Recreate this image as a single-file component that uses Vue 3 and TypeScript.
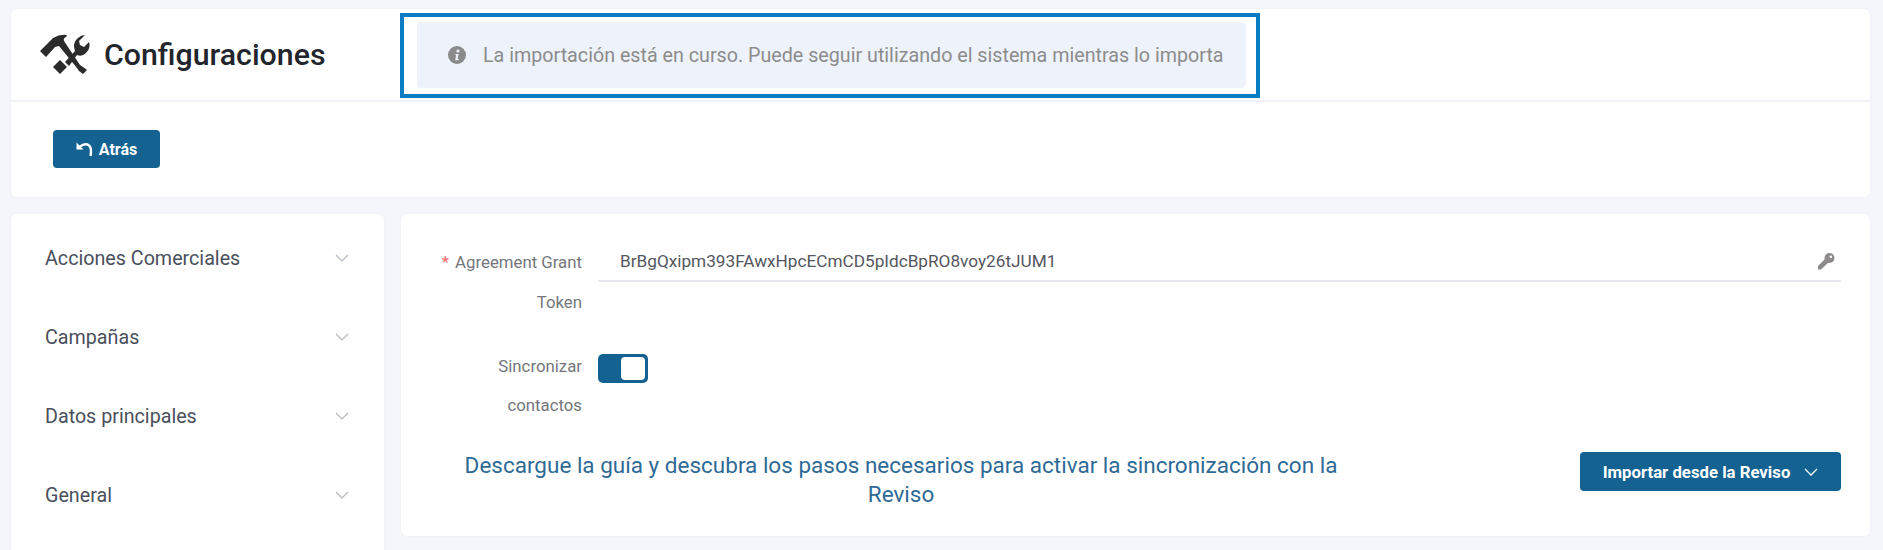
<script setup lang="ts">
const menu: string[] = ['Acciones Comerciales', 'Campañas', 'Datos principales', 'General']
</script>

<template>
  <div class="page">
    <section class="card top">
      <header class="head">
        <div class="title">
          <svg class="tools" width="50" height="40" viewBox="0 0 50 40">
            <path fill="#2b2b2b" d="M0 17 L13 4 Q20 0 27 1 L26 3 Q23 4 24 7 L40 31 L43 33 L47 36 L43 40 L39 37 L37 34 L19 12 L15 13 L6 23 Z" />
            <path fill="#2b2b2b" d="M13 33 L20 26 L27 33 L20 40 Z" />
            <path fill="#2b2b2b" d="M25 28 L35 17 Q32 9 38 4 Q41 1 45 1 L39 7 L40 11 L44 13 L49 8 Q51 14 46 19 Q42 23 37 21 L29 32 Z" />
          </svg>
          <h1>Configuraciones</h1>
        </div>
        <div class="highlight">
          <div class="alert">
            <svg width="18" height="18" viewBox="0 0 18 18">
              <circle cx="9" cy="9" r="9" fill="#8a8a8a" />
              <circle cx="10" cy="5" r="1.6" fill="#eef2fb" />
              <path d="M7.5 8 H10.6 L9.6 13 H10.8 L10.5 14.2 H7.2 L8.1 9.2 H7.3 Z" fill="#eef2fb" />
            </svg>
            <span>La importación está en curso. Puede seguir utilizando el sistema mientras lo importa</span>
          </div>
        </div>
      </header>
      <div class="actions">
        <button class="btn back" type="button">
          <svg width="18" height="15" viewBox="0 0 18 15">
            <path d="M0.5 0.5 V7.5 H7.5 Z" fill="#fff" />
            <path d="M3.5 5 Q9 0.5 13 3.5 Q16 6 14.5 14" fill="none" stroke="#fff" stroke-width="2.4" />
          </svg>
          Atrás
        </button>
      </div>
    </section>

    <div class="columns">
      <aside class="card side">
        <div v-for="item in menu" :key="item" class="menu-item">
          <span>{{ item }}</span>
          <svg width="14" height="8" viewBox="0 0 14 8">
            <path d="M1 1 L7 7 L13 1" fill="none" stroke="#b4b8c0" stroke-width="1.2" />
          </svg>
        </div>
      </aside>

      <main class="card form">
        <div class="row first">
          <label><i>*</i> Agreement Grant Token</label>
          <div class="input">
            <span>BrBgQxipm393FAwxHpcECmCD5pIdcBpRO8voy26tJUM1</span>
            <svg width="18" height="17" viewBox="0 0 18 17">
              <circle cx="12.5" cy="5" r="5" fill="#8d8a8c" />
              <circle cx="13.8" cy="3.8" r="1.3" fill="#fff" />
              <path d="M8.5 5.5 L12 9 L4 16.5 L1 16.5 L1 13 Z" fill="#8d8a8c" />
            </svg>
          </div>
        </div>
        <div class="row second">
          <label>Sincronizar contactos</label>
          <div class="switch"><b></b></div>
        </div>
        <div class="foot">
          <p>Descargue la guía y descubra los pasos necesarios para activar la sincronización con la Reviso</p>
          <button class="btn import" type="button">
            Importar desde la Reviso
            <svg width="14" height="8" viewBox="0 0 14 8">
              <path d="M1 1 L7 7 L13 1" fill="none" stroke="#fff" stroke-width="1.3" />
            </svg>
          </button>
        </div>
      </main>
    </div>
  </div>
</template>

<style>
html, body { margin: 0; background: #f4f6fb; overflow: hidden; }
</style>

<style scoped>
.page {
  box-sizing: border-box;
  width: 1883px;
  height: 550px;
  padding: 9px 13px 0 11px;
  overflow: hidden;
  font-family: Roboto, "Liberation Sans", sans-serif;
  background: #f4f6fb;
}
.card {
  background: #fff;
  border-radius: 6px;
  box-shadow: 0 0 2px #e9ebf3;
}
.top { height: 188px; }
.head {
  box-sizing: border-box;
  height: 93px;
  padding: 4px 0 2px 29px;
  display: flex;
  align-items: center;
  border-bottom: 2px solid #f1f2f7;
}
.title { width: 360px; margin-top: -2px; display: flex; align-items: center; gap: 14px; }
.tools { flex: none; margin-top: -2px; }
h1 {
  margin: 0;
  font-size: 30.3px;
  font-weight: 500;
  color: #23252d;
  white-space: nowrap;
}
.highlight {
  box-sizing: border-box;
  width: 860px;
  height: 85px;
  border: 4px solid #0a7cc4;
  padding: 5px 10px 6px 13px;
  display: flex;
}
.alert {
  flex: 1;
  display: flex;
  align-items: center;
  gap: 17px;
  padding-left: 31px;
  background: #edf2fb;
  border-radius: 4px;
  font-size: 19.7px;
  color: #8c8c8c;
  white-space: nowrap;
}
.actions { padding: 28px 0 0 42px; }
.btn {
  border: 0;
  background: #136292;
  color: #fff;
  border-radius: 4px;
  font-family: inherit;
  font-weight: 700;
  display: inline-flex;
  align-items: center;
  justify-content: center;
}
.back { width: 107px; height: 38px; font-size: 16px; gap: 5px; }
.columns {
  display: grid;
  grid-template-columns: 373px 1469px;
  gap: 17px;
  margin-top: 17px;
  align-items: start;
}
.side { height: 400px; padding: 5px 0 0 34px; box-sizing: border-box; }
.menu-item {
  height: 78.9px;
  display: flex;
  align-items: center;
  justify-content: space-between;
  padding-right: 35px;
  font-size: 19.7px;
  color: #4a4f5c;
}
.form { height: 322px; box-sizing: border-box; padding: 28px 29px 0 0; }
.row { display: flex; align-items: flex-start; }
label {
  box-sizing: border-box;
  width: 181px;
  margin-right: 16px;
  padding-left: 30px;
  text-align: right;
  font-size: 16.8px;
  line-height: 40px;
  color: #74767d;
  flex: none;
}
label i { color: #f56c6c; font-style: normal; margin-right: 2px; }
.input {
  flex: 1;
  height: 40px;
  box-sizing: border-box;
  display: flex;
  align-items: center;
  justify-content: space-between;
  padding: 0 6px 0 22px;
  border-bottom: 2px solid #e6e6ee;
  font-size: 17.2px;
  color: #55565e;
}
.second { margin-top: 25px; }
.second label { padding-left: 60px; line-height: 39px; }
.switch {
  box-sizing: border-box;
  width: 50px;
  height: 29px;
  margin-top: 7px;
  padding: 3px;
  background: #136292;
  border-radius: 5px;
  display: flex;
  justify-content: flex-end;
}
.switch b { width: 24px; background: #fff; border-radius: 4px; }
.foot {
  display: flex;
  align-items: flex-start;
  justify-content: space-between;
  margin-top: 27px;
}
.foot p {
  margin: -1px 0 0 50px;
  width: 900px;
  text-align: center;
  font-size: 22.5px;
  line-height: 29px;
  color: #2f6a96;
}
.import { width: 261px; height: 39px; font-size: 16.75px; gap: 14px; }
</style>
